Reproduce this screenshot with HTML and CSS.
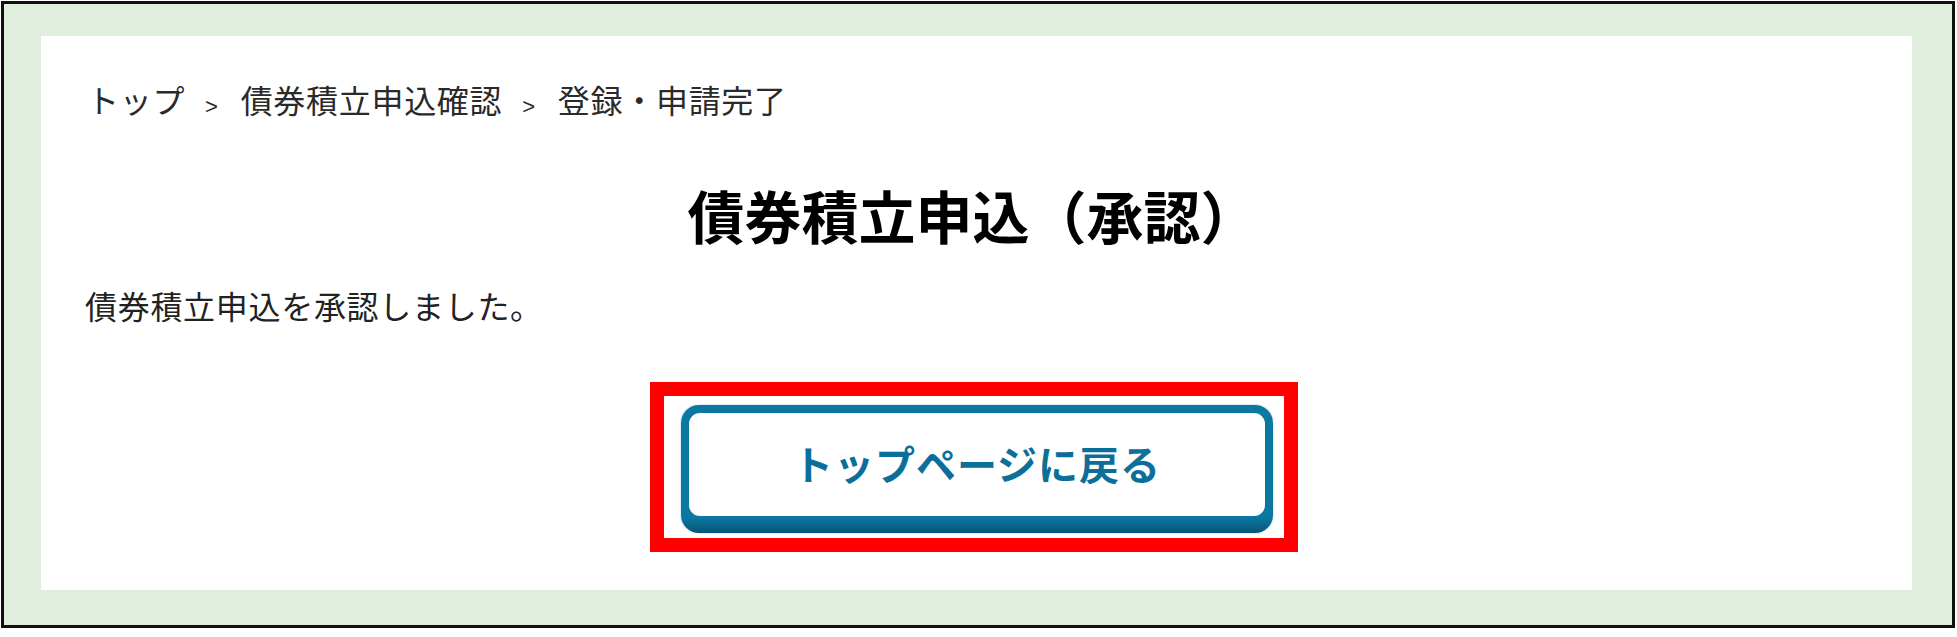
FILE: index.html
```html
<!DOCTYPE html>
<html lang="ja">
<head>
<meta charset="utf-8">
<title>債券積立申込（承認）</title>
<link rel="stylesheet" href="styles.css">
</head>
<body>
<div class="frame">
  <main class="panel">
    <nav class="crumbs">
      <span class="crumb">トップ</span><span class="sep">&gt;</span><span class="crumb">債券積立申込確認</span><span class="sep">&gt;</span><span class="crumb">登録・申請完了</span>
    </nav>
    <h1 class="title">債券積立申込（承認）</h1>
    <p class="message">債券積立申込を承認しました。</p>
    <div class="actions">
      <div class="highlight">
        <a class="btn" href="#"><span class="btn-face">トップページに戻る</span></a>
      </div>
    </div>
  </main>
</div>
</body>
</html>
```
FILE: styles.css
```css
html, body {
  margin: 0;
  padding: 0;
  background: #ffffff;
}
body {
  font-family: "Noto Sans CJK JP", "Noto Sans", sans-serif;
  color: #222;
}
.frame {
  box-sizing: border-box;
  margin: 1px 0 0 1px;
  width: 1954px;
  height: 627px;
  border: 3px solid #111;
  background: #dfeedd;
  padding: 32px 40px 35px 37px;
}
.panel {
  box-sizing: border-box;
  height: 100%;
  background: #ffffff;
  padding: 39px 44px 0 44px;
  display: flex;
  flex-direction: column;
}
.crumbs {
  display: flex;
  align-items: baseline;
  font-size: 32px;
  line-height: 48px;
  letter-spacing: 0.7px;
  color: #2a2a2a;
  margin-left: 2px;
}
.sep {
  font-family: "Liberation Sans", sans-serif;
  font-size: 22px;
  margin: 0 22px 0 20px;
  position: relative;
  top: 1px;
}
.title {
  margin: 44px 0 0 0;
  text-align: center;
  font-size: 57px;
  line-height: 80px;
  font-weight: 700;
  color: #000;
  padding-right: 8px;
}
.message {
  margin: 27px 0 0 0;
  font-size: 32px;
  line-height: 48px;
  letter-spacing: 0.7px;
  color: #222;
}
.actions {
  display: flex;
  justify-content: center;
  margin-top: 53px;
  padding-right: 5px;
}
.highlight {
  box-sizing: border-box;
  width: 648px;
  height: 170px;
  border: 14px solid #ff0000;
  padding: 9px 11px 6px 17px;
  display: flex;
}
.btn {
  box-sizing: border-box;
  display: flex;
  width: 592px;
  height: 128px;
  padding: 8px 8px 17px 8px;
  border-radius: 18px;
  background: linear-gradient(to bottom, #0b78a2 0, #0b78a2 calc(100% - 15px), #0a6f96 calc(100% - 12px), #045574 100%);
  box-shadow: 0 0 2px rgba(11, 120, 162, 0.45);
  text-decoration: none;
}
.btn-face {
  flex: 1;
  display: flex;
  align-items: center;
  justify-content: center;
  background: #ffffff;
  border-radius: 11px;
  font-size: 40px;
  font-weight: 700;
  letter-spacing: 1px;
  color: #0c6f9a;
  padding-bottom: 3px;
}
```
